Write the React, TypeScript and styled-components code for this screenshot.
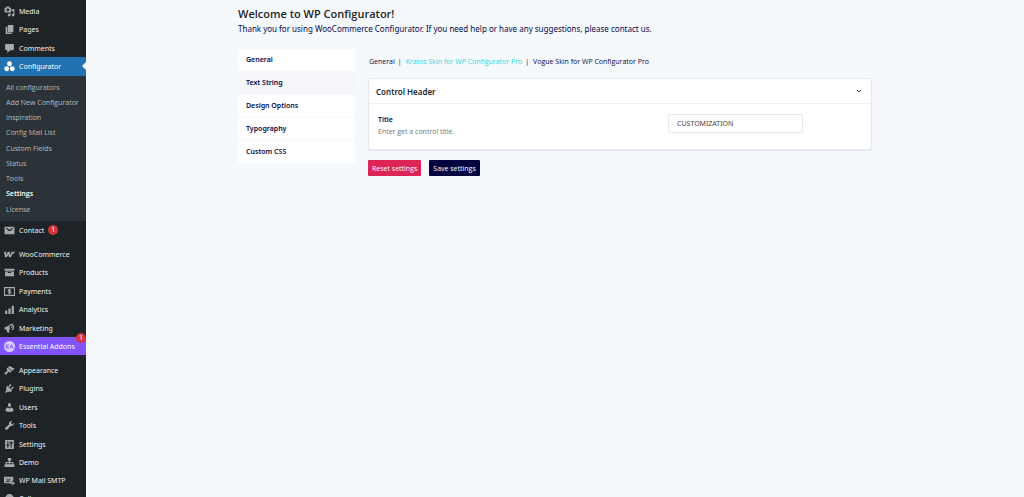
import React from "react";
import styled, { createGlobalStyle, css } from "styled-components";

const Global = createGlobalStyle`
  *, *::before, *::after { box-sizing: border-box; }
  body {
    margin: 0;
    background: #f5f9fc;
    color: #08084a;
    font-family: "Noto Sans", "Open Sans", sans-serif;
    font-size: 7px;
    overflow: hidden;
  }
  ul { margin: 0; padding: 0; list-style: none; }
  h1, h2, p { margin: 0; }
`;

const narrow = `"Open Sans", "Noto Sans", sans-serif`;

const Page = styled.div`
  display: flex;
  height: 100vh;
`;

const Sidebar = styled.nav`
  flex: none;
  width: 86px;
  padding-top: 2px;
  background: #1d2327;
  overflow: hidden;
`;

const MenuGroup = styled.ul`
  margin-bottom: 6px;
`;

const MenuLink = styled.a<{ $bg?: string }>`
  position: relative;
  display: flex;
  align-items: center;
  gap: 4px;
  height: 18px;
  padding-left: 4px;
  background: ${(p) => p.$bg ?? "transparent"};
  color: ${(p) => (p.$bg ? "#fff" : "#f0f0f1")};
  text-decoration: none;
  white-space: nowrap;
`;

const MenuItem = styled.li`
  &:nth-child(even):not(:nth-child(6)) > ${MenuLink} { height: 19px; }
`;

const Arrow = styled.span`
  position: absolute;
  right: 0;
  top: 5px;
  border: 4px solid transparent;
  border-left: 0;
  border-right-color: #f5f9fc;
`;

const Icon = styled.svg<{ $active?: boolean }>`
  flex: none;
  width: 11px;
  height: 11px;
  fill: ${(p) => (p.$active ? "#fff" : "#a7aaad")};
`;

const Badge = styled.span<{ $corner?: boolean }>`
  display: grid;
  place-items: center;
  width: 10px;
  height: 10px;
  border-radius: 50%;
  background: #d63638;
  color: #fff;
  line-height: 10px;
  ${(p) => p.$corner && css`
    position: absolute;
    top: -4px;
    right: 0;
  `}
`;

const SubMenu = styled.ul`
  padding: 4px 0;
  background: #2c3338;
  font-family: ${narrow};
`;

const SubItem = styled.li`
  height: 15px;
  padding-left: 6px;
  line-height: 15px;
  &:nth-child(4n) { height: 16px; }
`;

const SubLink = styled.a<{ $current?: boolean }>`
  color: ${(p) => (p.$current ? "#fff" : "#b4b9be")};
  font-weight: ${(p) => (p.$current ? 600 : 400)};
  text-decoration: none;
  white-space: nowrap;
`;

const Main = styled.main`
  flex: 1;
  padding: 6px 152px 0;
`;

const Heading = styled.h1`
  color: #1d2327;
  font-family: ${narrow};
  font-size: 11px;
  font-weight: 600;
  line-height: 16px;
`;

const Intro = styled.p`
  font-size: 8px;
  line-height: 14px;
`;

const Columns = styled.div`
  display: flex;
  gap: 13px;
  margin-top: 13px;
`;

const Tabs = styled.ul`
  display: flex;
  flex-direction: column;
  gap: 1px;
  flex: none;
  width: 117px;
`;

const TabLink = styled.a<{ $active?: boolean }>`
  display: block;
  padding-left: 8px;
  border-radius: 2px;
  background: ${(p) => (p.$active ? "#f5f6f9" : "#fff")};
  color: #08084a;
  font-weight: 600;
  line-height: 22px;
  text-decoration: none;
`;

const Content = styled.div`
  flex: 1;
  min-width: 0;
`;

const SkinNav = styled.ul`
  display: flex;
  padding: 7px 1px;
  font-family: ${narrow};
  line-height: 12px;
`;

const SkinItem = styled.li`
  & + &::before {
    content: "|";
    margin: 0 4px 0 3px;
  }
`;

const SkinLink = styled.a<{ $active?: boolean }>`
  color: ${(p) => (p.$active ? "#1fdbe4" : "#08084a")};
  font-weight: ${(p) => (p.$active ? 500 : 400)};
  text-decoration: none;
`;

const Card = styled.section`
  margin-top: 3px;
  border: 1px solid #e4e9f2;
  border-radius: 3px;
  background: #fff;
  box-shadow: 0 1px 1px #e4e6f0;
`;

const CardHeader = styled.header`
  display: flex;
  align-items: center;
  justify-content: space-between;
  height: 25px;
  padding: 0 9px 0 7px;
  border-bottom: 1px solid #eceef2;
`;

const CardTitle = styled.h2`
  color: #23282d;
  font-size: 8px;
  font-weight: 600;
`;

const Toggle = styled.button`
  display: flex;
  padding: 0;
  border: 0;
  background: none;
`;

const Field = styled.div`
  display: grid;
  grid-template-columns: 290px 135px;
  align-items: start;
  padding: 10px 9px 11px;
`;

const FieldLabel = styled.label`
  font-weight: 600;
  line-height: 12px;
`;

const Hint = styled.p`
  color: #72777c;
  font-family: ${narrow};
  line-height: 12px;
`;

const TextInput = styled.input`
  height: 19px;
  padding: 0 8px;
  border: 1px solid #e8e9ec;
  border-radius: 2px;
  background: #fff;
  color: #3c434a;
  font: inherit;
`;

const Actions = styled.div`
  display: flex;
  gap: 8px;
  margin-top: 10px;
`;

const Button = styled.button<{ $bg: string }>`
  height: 16px;
  padding: 0 4px;
  border: 0;
  border-radius: 1px;
  background: ${(p) => p.$bg};
  color: #fff;
  font-family: ${narrow};
  font-size: 7px;
`;

const icons: Record<string, React.ReactNode> = {
  media: <path d="M13 11V4c0-.55-.45-1-1-1h-1.670L9 1H5L3.670 3H2c-.55 0-1 .45-1 1v7c0 .55.45 1 1 1h10c.55 0 1-.45 1-1zM7 4.500c1.380 0 2.500 1.120 2.500 2.500S8.380 9.500 7 9.500 4.500 8.380 4.500 7 5.620 4.500 7 4.500zM14 6h5v10.500c0 1.380-1.120 2.500-2.500 2.500S14 17.880 14 16.500s1.120-2.500 2.500-2.500c.17 0 .34.020.5.050V9h-3V6zm-4 8.050V13h2v3.500c0 1.380-1.120 2.500-2.500 2.500S7 17.880 7 16.500 8.120 14 9.500 14c.17 0 .34.020.5.050z" />,
  pages: <path d="M7 2h10v13H7zM3 5h3v11h8v2H3z" />,
  comments: <path d="M4 2h12q2 0 2 2v7q0 2-2 2h-5l-5 5v-5H4q-2 0-2-2V4q0-2 2-2z" />,
  configurator: <g><circle cx="10" cy="5" r="4.500" /><circle cx="5" cy="14" r="4.500" /><circle cx="15" cy="14" r="4.500" /></g>,
  contact: <path fillRule="evenodd" d="M1 3h18v14H1zM3 5l5 6h4l5-6-2 0-5 4-5-4z" />,
  woo: <path d="M0 5h4l0 6 3-6h3l1 6 3-6h6l-2 3h-2l-4 7h-3l-1-5-3 5H2z" />,
  products: <path d="M1 3h18v4H1zM2 8h16v9H2zM7 9v2h6V9z" fillRule="evenodd" />,
  payments: <g><path fillRule="evenodd" d="M0 2h20v16H0zM2 4v12h16V4z" /><path d="M13 7H8v3h4v3H7M10 5v10" fill="none" stroke="#a7aaad" strokeWidth="1.800" /></g>,
  analytics: <path d="M2 12h4v6H2zM8 8h4v10H8zM14 3h4v15h-4z" />,
  marketing: <path fillRule="evenodd" d="M1 8l9-4q3-4 6-2 4 4 2 9-2 3-5 1l-4 0 1 5-3 1-3-6H2q-2-2-1-4zM13 4a3 4 0 1 0 .1 0zM13 6l2 1v2h-2z" />,
  appearance: <path d="M14.480 11.060L7.410 3.990l1.500-1.500c.5-.56 2.300-.47 3.510.32 1.210.8 1.430 1.280 2.910 2.100 1.180.64 2.450 1.260 4.450.85zm-.71.71L6.700 4.700 4.930 6.470c-.39.39-.39 1.020 0 1.410l1.060 1.060c.39.39.39 1.030 0 1.420-.6.6-1.430 1.110-2.210 1.690-.35.26-.7.53-1.010.84C1.430 14.230.4 16.080 1.400 17.070c.99 1 2.840-.03 4.180-1.360.31-.31.58-.66.85-1.020.57-.78 1.080-1.610 1.690-2.210.39-.39 1.020-.39 1.410 0l1.060 1.060c.39.39 1.020.39 1.410 0z" />,
  plugins: <path d="M13.110 4.360L9.870 7.600 8 5.730l3.240-3.240c.35-.34 1.050-.2 1.560.32.52.51.66 1.210.31 1.550zm-8 1.770l.91-1.120 9.010 9.010-1.190.84c-.71.71-2.630 1.160-3.820 1.160H6.140L4.900 17.260c-.59.59-1.540.59-2.120 0-.59-.58-.59-1.530 0-2.120l1.240-1.240v-3.880c0-1.130.4-3.190 1.090-3.890zm7.260 3.970l3.240-3.240c.34-.35 1.040-.21 1.550.31.52.51.66 1.210.31 1.550l-3.240 3.250z" />,
  users: <path d="M10 9.250c-2.270 0-2.730-3.440-2.730-3.440C7 4.020 7.820 2 9.970 2c2.160 0 2.980 2.020 2.710 3.810 0 0-.41 3.440-2.680 3.440zm0 2.570L12.720 10c2.390 0 4.520 2.330 4.520 4.530v2.490s-3.650 1.130-7.240 1.130c-3.650 0-7.240-1.130-7.240-1.130v-2.490c0-2.250 1.940-4.480 4.470-4.480z" />,
  tools: <path d="M16.680 9.770c-1.340 1.340-3.300 1.670-4.950.99l-5.410 6.520c-.99.99-2.590.99-3.580 0s-.99-2.590 0-3.570l6.520-5.420c-.68-1.650-.35-3.610.99-4.950 1.280-1.280 3.120-1.620 4.720-1.060l-2.890 2.890 2.820 2.820 2.860-2.870c.53 1.580.18 3.390-1.080 4.650z" />,
  settings: <path fillRule="evenodd" d="M3 2h14q1 0 1 1v14q0 1-1 1H3q-1 0-1-1V3q0-1 1-1zM6 4v6H4v2h2v4h2v-4h2v-2H8V4zM12 4v2h-2v2h2v8h2V8h2V6h-2V4z" />,
  demo: <path d="M7 2h6v5h-2v2h6v4h2v5h-6v-5h2v-2h-4v2h2v5H7v-5h2v-2H5v2h2v5H1v-5h2V9h6V7H7z" />,
  smtp: <g><path fillRule="evenodd" d="M0 3h17v7l-3 1v4H0zM2 5l6 5 7-5-7 3zM2 13l4-3 2 1 2-1 2 2" /><path d="M15 11l5 4-5 4v-3h-4v-2h4z" /></g>,
  collapse: <circle cx="10" cy="10" r="8" />,
};

type Entry = { label: string; icon: string; bg?: string; badge?: "inline" | "corner" };

const groups: Entry[][] = [
  [
    { label: "Media", icon: "media" },
    { label: "Pages", icon: "pages" },
    { label: "Comments", icon: "comments" },
    { label: "Configurator", icon: "configurator", bg: "#2271b1" },
    { label: "Contact", icon: "contact", badge: "inline" },
  ],
  [
    { label: "WooCommerce", icon: "woo" },
    { label: "Products", icon: "products" },
    { label: "Payments", icon: "payments" },
    { label: "Analytics", icon: "analytics" },
    { label: "Marketing", icon: "marketing" },
    { label: "Essential Addons", icon: "essential", bg: "#7f54fb", badge: "corner" },
  ],
  [
    { label: "Appearance", icon: "appearance" },
    { label: "Plugins", icon: "plugins" },
    { label: "Users", icon: "users" },
    { label: "Tools", icon: "tools" },
    { label: "Settings", icon: "settings" },
    { label: "Demo", icon: "demo" },
    { label: "WP Mail SMTP", icon: "smtp" },
    { label: "Collapse menu", icon: "collapse" },
  ],
];

const subItems = ["All configurators", "Add New Configurator", "Inspiration", "Config Mail List", "Custom Fields", "Status", "Tools", "Settings", "License"];
const tabs = ["General", "Text String", "Design Options", "Typography", "Custom CSS"];
const skins = ["General", "Kratos Skin for WP Configurator Pro", "Vogue Skin for WP Configurator Pro"];

function MenuIcon({ name, active }: { name: string; active?: boolean }) {
  return (
    <Icon viewBox="0 0 20 20" $active={active} aria-hidden="true">
      {name === "essential" ? (
        <g>
          <circle cx="10" cy="10" r="10" fill="#d9ccff" />
          <path d="M9 7H4v6h5M4 10h4M11 14l2-7h1l3 7M12 11h4" fill="none" stroke="#7f54fb" strokeWidth="1.500" />
        </g>
      ) : icons[name]}
    </Icon>
  );
}

export default function App() {
  return (
    <Page>
      <Global />
      <Sidebar aria-label="Main menu">
        {groups.map((group, i) => (
          <MenuGroup key={i}>
            {group.map((e) => (
              <MenuItem key={e.label}>
                <MenuLink href="#" $bg={e.bg}>
                  <MenuIcon name={e.icon} active={!!e.bg} />
                  {e.label}
                  {e.badge && <Badge $corner={e.badge === "corner"}>1</Badge>}
                  {e.label === "Configurator" && <Arrow />}
                </MenuLink>
                {e.label === "Configurator" && (
                  <SubMenu>
                    {subItems.map((s) => (
                      <SubItem key={s}><SubLink href="#" $current={s === "Settings"}>{s}</SubLink></SubItem>
                    ))}
                  </SubMenu>
                )}
              </MenuItem>
            ))}
          </MenuGroup>
        ))}
      </Sidebar>
      <Main>
        <Heading>Welcome to WP Configurator!</Heading>
        <Intro>Thank you for using WooCommerce Configurator. If you need help or have any suggestions, please contact us.</Intro>
        <Columns>
          <Tabs>
            {tabs.map((t) => (
              <li key={t}><TabLink href="#" $active={t === "Text String"}>{t}</TabLink></li>
            ))}
          </Tabs>
          <Content>
            <SkinNav>
              {skins.map((s, i) => (
                <SkinItem key={s}><SkinLink href="#" $active={i === 1}>{s}</SkinLink></SkinItem>
              ))}
            </SkinNav>
            <Card>
              <CardHeader>
                <CardTitle>Control Header</CardTitle>
                <Toggle type="button" aria-label="Toggle section">
                  <svg width="6" height="6" viewBox="0 0 6 6" fill="none" stroke="#3c434a"><path d="M1 2l2 2 2-2" /></svg>
                </Toggle>
              </CardHeader>
              <Field>
                <div>
                  <FieldLabel htmlFor="control-title">Title</FieldLabel>
                  <Hint>Enter get a control title.</Hint>
                </div>
                <TextInput id="control-title" type="text" defaultValue="CUSTOMIZATION" />
              </Field>
            </Card>
            <Actions>
              <Button type="button" $bg="#dc2457">Reset settings</Button>
              <Button type="button" $bg="#02023f">Save settings</Button>
            </Actions>
          </Content>
        </Columns>
      </Main>
    </Page>
  );
}
